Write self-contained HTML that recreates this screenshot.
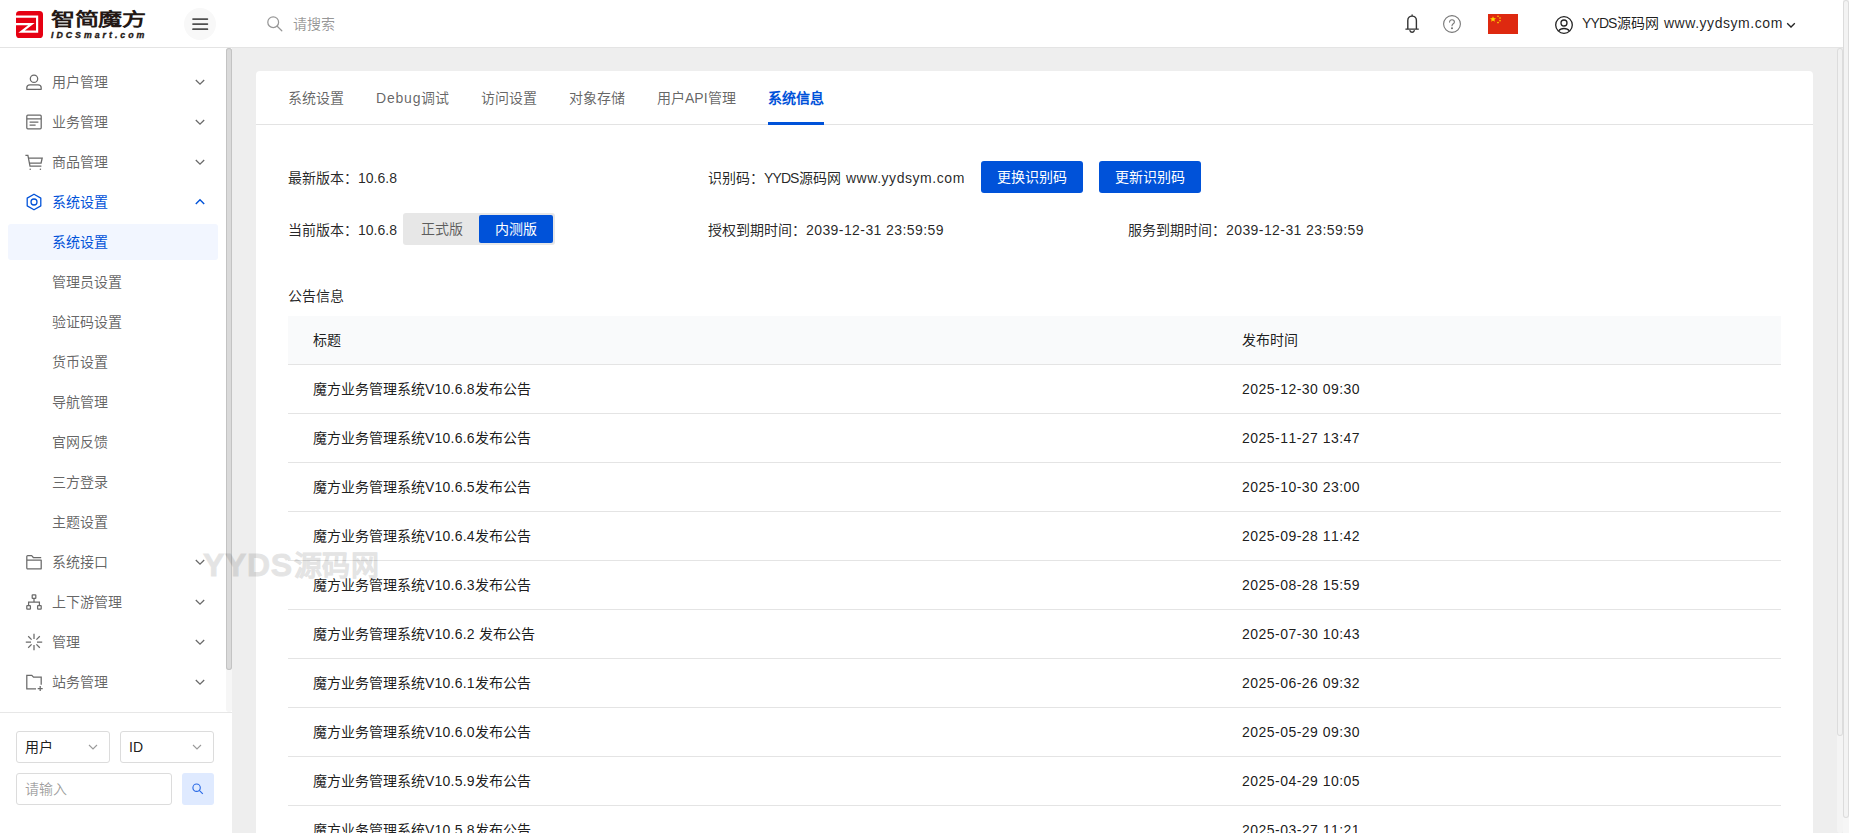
<!DOCTYPE html>
<html lang="zh-CN">
<head>
<meta charset="utf-8">
<title>系统信息</title>
<style>
*{box-sizing:border-box;margin:0;padding:0}
html,body{width:1849px;height:833px;overflow:hidden;background:#eee}
body{font-family:"Liberation Sans",sans-serif;font-size:14px;color:rgba(0,0,0,.9);position:relative}
.abs{position:absolute}
/* header */
#hdr{position:absolute;left:0;top:0;width:1843px;height:48px;background:#fff;border-bottom:1px solid #e4e4e4}
#logo-mark{position:absolute;left:16px;top:11px;width:27px;height:27px}
#logo-cn{position:absolute;left:50.500px;top:9.200px;font-size:18.400px;line-height:22px;font-weight:700;color:#231815;transform-origin:0 50%;transform:scaleX(1.31);white-space:nowrap;letter-spacing:0}
#logo-en{position:absolute;left:51px;top:29.500px;font-size:8.800px;line-height:10px;font-weight:700;font-style:italic;color:#231815;white-space:nowrap;letter-spacing:2.980px;-webkit-text-stroke:.35px #231815}
#burger{position:absolute;left:184px;top:8px;width:32px;height:32px;border-radius:50%;background:#f8f8f8}
#burger i{position:absolute;left:8px;width:16px;height:1.400px;background:#4a4a4a;border-radius:1px}
#search-ico{position:absolute;left:266px;top:15px;width:17px;height:17px}
#search-ph{position:absolute;left:293px;top:14px;line-height:20px;color:rgba(0,0,0,.42)}
.hico{position:absolute}
#flag{position:absolute;left:1488px;top:14px;width:30px;height:20px;background:#de2910}
#uname{position:absolute;left:1582px;top:12px;line-height:22px;white-space:nowrap;color:rgba(0,0,0,.88)}
/* sidebar */
#side{position:absolute;left:0;top:48px;width:232px;height:785px;background:#fff}
#side-track{position:absolute;left:226px;top:48px;width:6px;height:664px;background:#f6f6f6;border-radius:3px}
#side-thumb{position:absolute;left:226px;top:48px;width:6px;height:622px;background:#dadada;border-radius:3px;box-shadow:inset 0 0 0 1px #c3c3c3}
.mi{position:absolute;left:0;width:226px;height:40px;line-height:40px;color:rgba(0,0,0,.62);white-space:nowrap}
.mi .t{position:absolute;left:52px;top:0}
.mi svg.ic{position:absolute;left:25px;top:11px;width:18px;height:18px}
.mi svg.ch{position:absolute;left:193px;top:13px;width:14px;height:14px}
.mi.on{color:#0052d9}
.sub{position:absolute;left:8px;width:210px;height:36px;line-height:36px;border-radius:3px;color:rgba(0,0,0,.62);white-space:nowrap}
.sub span{position:absolute;left:44px;top:0}
.sub.on{background:#f2f6ff;color:#0052d9}
#side-bot{position:absolute;left:0;top:712px;width:232px;height:121px;border-top:1px solid #e7e7e7;background:#fff}
.sel{position:absolute;top:18px;width:94px;height:32px;border:1px solid #dcdcdc;border-radius:3px;line-height:30px;padding-left:8px;background:#fff}
.sel svg{position:absolute;right:10px;top:9px;width:12px;height:12px}
#inp{position:absolute;left:16px;top:60px;width:156px;height:32px;border:1px solid #dcdcdc;border-radius:3px;line-height:30px;padding-left:8px;color:rgba(0,0,0,.38)}
#sbtn{position:absolute;left:182px;top:60px;width:32px;height:32px;border-radius:3px;background:#dfeaff}
#sbtn svg{position:absolute;left:9px;top:9px;width:14px;height:14px}
/* main */
#card{position:absolute;left:256px;top:71px;width:1557px;height:770px;background:#fff;border-radius:4px 4px 0 0}
#tabs{position:absolute;left:0;top:0;width:1557px;height:54px;border-bottom:1px solid #e3e3e3}
.tab{position:absolute;top:16px;line-height:22px;color:rgba(0,0,0,.62);white-space:nowrap}
.tab.on{color:#0052d9;font-weight:700}
#tabbar{position:absolute;left:512px;top:51px;width:56px;height:3px;background:#0052d9}
.lbl{position:absolute;line-height:22px;white-space:nowrap;color:rgba(0,0,0,.86)}
.btn{position:absolute;top:90px;width:102px;height:32px;line-height:32px;text-align:center;background:#0052d9;color:#fff;border-radius:3px}
#rg{position:absolute;left:147px;top:142px;width:152px;height:32px;background:#e7e7e7;border-radius:3px}
#rg .a{position:absolute;left:2px;top:2px;width:74px;height:28px;line-height:28px;text-align:center;color:rgba(0,0,0,.6)}
#rg .b{position:absolute;left:76px;top:2px;width:74px;height:28px;line-height:28px;text-align:center;color:#fff;background:#0052d9;border-radius:2px}
#th{position:absolute;left:32px;top:245px;width:1493px;height:49px;background:#f9fafb;border-bottom:1px solid #e4e4e4}
.row .c2{top:-.5px}.row{position:absolute;left:32px;width:1493px;height:49px;border-bottom:1px solid #e4e4e4;line-height:48px}
.c1{position:absolute;left:25px;top:0;white-space:nowrap}
.c2{position:absolute;left:954px;top:0;white-space:nowrap}
#wm{position:absolute;left:203px;top:542.500px;line-height:44px;font-weight:700;color:#000;opacity:.1;white-space:nowrap}#wm .l{font-size:32px;-webkit-text-stroke:.9px #000;letter-spacing:.65px}#wm .c{font-size:28px;font-weight:900;margin-left:1px;-webkit-text-stroke:.45px #000;letter-spacing:.5px}
/* scrollbars right */
#sb1{position:absolute;left:1837px;top:48px;width:6px;height:785px;background:#f4f4f4;border-radius:3px}
#sb1t{position:absolute;left:1837px;top:48px;width:6px;height:688px;background:#f1f1f1;border-radius:3px;box-shadow:inset 0 0 0 1px #dcdcdc}
#sb2{position:absolute;left:1843px;top:0;width:6px;height:833px;background:#f6f6f6}
#sb2t{position:absolute;left:1843px;top:0;width:6px;height:818px;background:#f3f3f3;border-radius:3px;box-shadow:inset 0 0 0 1px #dcdcdc}
.up{letter-spacing:-.9px}.lo{letter-spacing:.55px;margin-left:1.500px}.c2,.dt{font-kerning:none}.dt{letter-spacing:.42px}.c2{letter-spacing:.47px}
.v{letter-spacing:.22px}
</style>
</head>
<body>
<div id="hdr">
<svg id="logo-mark" viewBox="0 0 27 27"><rect x="0" y="0" width="27" height="27" rx="3.6" fill="#e60012"/><path d="M0 5.600H21.100V20.600H5.600L15.400 13.100H0" fill="none" stroke="#fff" stroke-width="2.200" stroke-linejoin="miter"/></svg>
<div id="logo-cn">智简魔方</div>
<div id="logo-en">IDCSmart.com</div>
<div id="burger"><svg width="32" height="32" viewBox="0 0 32 32" stroke="#505050" stroke-width="1.700" stroke-linecap="round"><path d="M9 11.100h14.400M9 16.100h14.400M9 21.200h14.400"/></svg></div>
<svg id="search-ico" viewBox="0 0 17 17" fill="none" stroke="#979797" stroke-width="1.250"><circle cx="7.200" cy="7.200" r="5.400"/><path d="M11.2 11.2l4.6 4.6" stroke-linecap="round"/></svg>
<div id="search-ph">请搜索</div>
<svg class="hico" style="left:1403px;top:14px;width:18px;height:20px" viewBox="0 0 18 20" fill="none" stroke="#333" stroke-width="1.400"><path d="M4.800 15V6.400a4.300 4.300 0 0 1 8.600 0V15M2.900 15.100h12.400M9.100 1v1.100" stroke-linecap="round" stroke-linejoin="round"/><path d="M7 16.700c.3.900 1.100 1.500 2.100 1.500s1.800-.6 2.100-1.500" stroke-linecap="round"/></svg>
<svg class="hico" style="left:1442px;top:14px;width:20px;height:20px" viewBox="0 0 20 20" fill="none" stroke="#777" stroke-width="1.1"><circle cx="10" cy="10" r="8.4"/><path d="M7.6 8.1c0-1.4 1-2.4 2.4-2.4s2.4.9 2.4 2.2c0 1.9-2.4 1.9-2.4 3.9" stroke-linecap="round"/><circle cx="10" cy="14.3" r=".5" fill="#777"/></svg>
<div id="flag"><svg viewBox="0 0 30 20" width="30" height="20"><polygon points="5,2.2 5.8,4.3 8,4.3 6.3,5.7 6.9,7.8 5,6.5 3.1,7.8 3.7,5.7 2,4.3 4.2,4.3" fill="#ffde00"/><circle cx="10" cy="2.2" r=".8" fill="#ffde00"/><circle cx="12" cy="4" r=".8" fill="#ffde00"/><circle cx="12" cy="6.8" r=".8" fill="#ffde00"/><circle cx="10" cy="8.6" r=".8" fill="#ffde00"/></svg></div>
<svg class="hico" style="left:1554px;top:15px;width:20px;height:20px" viewBox="0 0 20 20" fill="none" stroke="#222" stroke-width="1.3"><circle cx="10" cy="10" r="8.3"/><circle cx="10" cy="8" r="3"/><path d="M4.600 16c1.200-1.700 3-2.500 5.400-2.500s4.200.8 5.400 2.500"/></svg>
<div id="uname"><span class="up">YYDS</span>源码网 <span class="lo">www.yydsym.com</span></div>
<svg class="hico" style="left:1785px;top:19px;width:12px;height:12px" viewBox="0 0 12 12" fill="none" stroke="#222" stroke-width="1.3"><path d="M2.2 4.3L6 8l3.800-3.700"/></svg>
</div>
<div id="side">
<div class="mi" style="top:14px"><svg class="ic" viewBox="0 0 18 18" fill="none" stroke="#6a6a6a" stroke-width="1.25"><circle cx="9" cy="5.700" r="3.700"/><path d="M1.800 16.300v-1.500c0-1.700 1.400-2.900 3.100-2.900h8.200c1.700 0 3.100 1.200 3.100 2.900v1.500z" stroke-linejoin="round"/></svg><span class="t">用户管理</span><svg class="ch" viewBox="0 0 14 14" fill="none" stroke="#6a6a6a" stroke-width="1.3"><path d="M2.800 5L7 9.2 11.2 5"/></svg></div>
<div class="mi" style="top:54px"><svg class="ic" viewBox="0 0 18 18" fill="none" stroke="#6a6a6a" stroke-width="1.25"><rect x="1.800" y="2.200" width="14.400" height="13.600" rx="1"/><path d="M1.800 5.800h14.400M4.600 9h8.800M4.600 12.200h6"/></svg><span class="t">业务管理</span><svg class="ch" viewBox="0 0 14 14" fill="none" stroke="#6a6a6a" stroke-width="1.3"><path d="M2.800 5L7 9.2 11.2 5"/></svg></div>
<div class="mi" style="top:94px"><svg class="ic" viewBox="0 0 18 18" fill="none" stroke="#6a6a6a" stroke-width="1.25"><path d="M0.400 2.300h2.500l2.100 10.900h11.400"/><path d="M3.300 5h13.900l-1.100 5H4.300"/><circle cx="5.200" cy="16.300" r=".75" fill="#6a6a6a" stroke="none"/><circle cx="15.400" cy="16.300" r=".75" fill="#6a6a6a" stroke="none"/></svg><span class="t">商品管理</span><svg class="ch" viewBox="0 0 14 14" fill="none" stroke="#6a6a6a" stroke-width="1.3"><path d="M2.800 5L7 9.2 11.2 5"/></svg></div>
<div class="mi on" style="top:134px"><svg class="ic" viewBox="0 0 18 18" fill="none" stroke="#0052d9" stroke-width="1.280"><path d="M9 1.200l6.800 3.900v7.800L9 16.800l-6.800-3.900V5.100z" stroke-linejoin="round"/><circle cx="9" cy="9" r="3"/></svg><span class="t">系统设置</span><svg class="ch" viewBox="0 0 14 14" fill="none" stroke="#0052d9" stroke-width="1.4"><path d="M2.800 9L7 4.800 11.200 9"/></svg></div>
<div class="sub on" style="top:176px"><span>系统设置</span></div>
<div class="sub" style="top:216px"><span>管理员设置</span></div>
<div class="sub" style="top:256px"><span>验证码设置</span></div>
<div class="sub" style="top:296px"><span>货币设置</span></div>
<div class="sub" style="top:336px"><span>导航管理</span></div>
<div class="sub" style="top:376px"><span>官网反馈</span></div>
<div class="sub" style="top:416px"><span>三方登录</span></div>
<div class="sub" style="top:456px"><span>主题设置</span></div>
<div class="mi" style="top:494px"><svg class="ic" viewBox="0 0 18 18" fill="none" stroke="#6a6a6a" stroke-width="1.25"><path d="M1.800 15.800V3.600c0-.5.400-.9.900-.9h4l1.600 1.800h7.900M1.800 15.800h14.400V7.200H1.800" stroke-linejoin="round"/></svg><span class="t">系统接口</span><svg class="ch" viewBox="0 0 14 14" fill="none" stroke="#6a6a6a" stroke-width="1.3"><path d="M2.800 5L7 9.2 11.2 5"/></svg></div>
<div class="mi" style="top:534px"><svg class="ic" viewBox="0 0 18 18" fill="none" stroke="#6a6a6a" stroke-width="1.25"><rect x="7.200" y="1.800" width="3.600" height="3.600" rx=".5"/><rect x="1.800" y="12.600" width="3.600" height="3.600" rx=".5"/><rect x="12.600" y="12.600" width="3.600" height="3.600" rx=".5"/><path d="M9 5.400v3.800M3.600 12.600V9.200h10.800v3.400"/></svg><span class="t">上下游管理</span><svg class="ch" viewBox="0 0 14 14" fill="none" stroke="#6a6a6a" stroke-width="1.3"><path d="M2.800 5L7 9.2 11.2 5"/></svg></div>
<div class="mi" style="top:574px"><svg class="ic" viewBox="0 0 18 18" fill="none" stroke="#6a6a6a" stroke-width="1.25"><path d="M9 0.800v5.200M9 12v5.200M0.800 9h5.200M12 9h5.200M3.200 3.200l3.400 3.400M11.400 11.400l3.400 3.400M3.200 14.800l3.400-3.400M11.400 6.600l3.400-3.400"/></svg><span class="t">管理</span><svg class="ch" viewBox="0 0 14 14" fill="none" stroke="#6a6a6a" stroke-width="1.3"><path d="M2.800 5L7 9.2 11.2 5"/></svg></div>
<div class="mi" style="top:614px"><svg class="ic" viewBox="0 0 18 18" fill="none" stroke="#6a6a6a" stroke-width="1.25"><path d="M11 15.800H1.800V2.400h5l1.700 1.800h7.700v7.600"/><path d="M15.200 13v5M12.700 15.500h5"/></svg><span class="t">站务管理</span><svg class="ch" viewBox="0 0 14 14" fill="none" stroke="#6a6a6a" stroke-width="1.3"><path d="M2.800 5L7 9.2 11.2 5"/></svg></div>
</div>
<div id="side-track"></div><div id="side-thumb"></div>
<div id="side-bot">
<div class="sel" style="left:16px">用户<svg viewBox="0 0 12 12" fill="none" stroke="#9a9a9a" stroke-width="1.1"><path d="M2 4l4 4 4-4"/></svg></div>
<div class="sel" style="left:120px">ID<svg viewBox="0 0 12 12" fill="none" stroke="#9a9a9a" stroke-width="1.1"><path d="M2 4l4 4 4-4"/></svg></div>
<div id="inp">请输入</div>
<div id="sbtn"><svg viewBox="0 0 14 14" fill="none" stroke="#2b6be6" stroke-width="1.150"><circle cx="5.600" cy="5.700" r="3.700"/><path d="M8.300 8.400l3.500 3.500"/></svg></div>
</div>
<div id="card">
<div id="tabs"><div class="tab" style="left:32px">系统设置</div><div class="tab" style="left:120px"><span style="letter-spacing:.8px">Debug</span>调试</div><div class="tab" style="left:225px">访问设置</div><div class="tab" style="left:313px">对象存储</div><div class="tab" style="left:401px">用户API管理</div><div class="tab on" style="left:512px">系统信息</div><div id="tabbar"></div></div>
<div class="lbl" style="left:32px;top:96px">最新版本：10.6.8</div>
<div class="lbl" style="left:452px;top:96px">识别码：<span class="up">YYDS</span>源码网 <span class="lo">www.yydsym.com</span></div>
<div class="btn" style="left:725px">更换识别码</div>
<div class="btn" style="left:843px">更新识别码</div>
<div class="lbl" style="left:32px;top:148px">当前版本：10.6.8</div>
<div id="rg"><div class="a">正式版</div><div class="b">内测版</div></div>
<div class="lbl" style="left:452px;top:148px">授权到期时间：<span class="dt">2039-12-31 23:59:59</span></div>
<div class="lbl" style="left:872px;top:148px">服务到期时间：<span class="dt">2039-12-31 23:59:59</span></div>
<div class="lbl" style="left:32px;top:214px">公告信息</div>
<div id="th"><span class="c1" style="line-height:48px">标题</span><span class="c2" style="line-height:48px;letter-spacing:0">发布时间</span></div>
<div class="row" style="top:294px"><span class="c1">魔方业务管理系统<span class="v">V10.6.8</span>发布公告</span><span class="c2">2025-12-30 09:30</span></div>
<div class="row" style="top:343px"><span class="c1">魔方业务管理系统<span class="v">V10.6.6</span>发布公告</span><span class="c2">2025-11-27 13:47</span></div>
<div class="row" style="top:392px"><span class="c1">魔方业务管理系统<span class="v">V10.6.5</span>发布公告</span><span class="c2">2025-10-30 23:00</span></div>
<div class="row" style="top:441px"><span class="c1">魔方业务管理系统<span class="v">V10.6.4</span>发布公告</span><span class="c2">2025-09-28 11:42</span></div>
<div class="row" style="top:490px"><span class="c1">魔方业务管理系统<span class="v">V10.6.3</span>发布公告</span><span class="c2">2025-08-28 15:59</span></div>
<div class="row" style="top:539px"><span class="c1">魔方业务管理系统<span class="v">V10.6.2</span> 发布公告</span><span class="c2">2025-07-30 10:43</span></div>
<div class="row" style="top:588px"><span class="c1">魔方业务管理系统<span class="v">V10.6.1</span>发布公告</span><span class="c2">2025-06-26 09:32</span></div>
<div class="row" style="top:637px"><span class="c1">魔方业务管理系统<span class="v">V10.6.0</span>发布公告</span><span class="c2">2025-05-29 09:30</span></div>
<div class="row" style="top:686px"><span class="c1">魔方业务管理系统<span class="v">V10.5.9</span>发布公告</span><span class="c2">2025-04-29 10:05</span></div>
<div class="row" style="top:735px"><span class="c1">魔方业务管理系统<span class="v">V10.5.8</span>发布公告</span><span class="c2">2025-03-27 11:21</span></div>
</div>
<div id="wm"><span class="l">YYDS</span><span class="c">源码网</span></div>
<div id="sb1"></div><div id="sb1t"></div><div id="sb2"></div><div id="sb2t"></div>
</body>
</html>
